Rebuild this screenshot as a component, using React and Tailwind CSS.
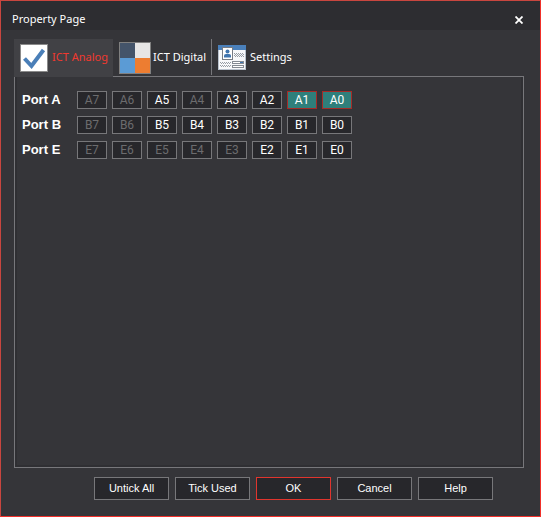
import { useState } from 'react'

const PORTS = [
  { name: 'A', disabled: [7, 6, 4] },
  { name: 'B', disabled: [7, 6] },
  { name: 'E', disabled: [7, 6, 5, 4, 3] },
]
const BITS = [7, 6, 5, 4, 3, 2, 1, 0]

function CheckIcon() {
  return (
    <svg className="size-7" viewBox="0 0 28 28" aria-hidden="true">
      <rect x="0.5" y="0.5" width="27" height="27" fill="#fff" stroke="#8a8a8a" />
      <path d="M4.5 14.5L11.5 22L23.5 6" fill="none" stroke="#4a7fb8" strokeWidth="4" />
    </svg>
  )
}

function BlocksIcon() {
  return (
    <svg className="size-8" viewBox="0 0 32 32" aria-hidden="true">
      <rect width="16" height="16" fill="#44546a" />
      <rect x="16" width="16" height="16" fill="#e7e6e6" />
      <rect y="16" width="16" height="16" fill="#5b9bd5" />
      <rect x="16" y="16" width="16" height="16" fill="#ed7d31" />
      <rect x="0.5" y="0.5" width="31" height="31" fill="none" stroke="#808080" />
    </svg>
  )
}

function ProfileIcon() {
  return (
    <svg className="h-[25px] w-7" viewBox="0 0 28 25" aria-hidden="true">
      <rect x="0.5" y="0.5" width="27" height="24" fill="#f7f8fa" stroke="#b9c2cd" />
      <rect width="28" height="5" fill="#4a80bb" />
      <rect x="4.5" y="2.5" width="10" height="12" fill="#fff" stroke="#777c84" />
      <circle cx="9.5" cy="6.5" r="2" fill="#3f74ae" />
      <path d="M6 12.5V10.5Q6 9 8 9H11Q13 9 13 10.5V12.5Z" fill="#3f74ae" />
      <g stroke="#969ca4" strokeDasharray="1 1">
        <path d="M16 8.5H26M17 9.5H26M16 10.5H26M17 11.5H26" />
        <path d="M2 17.5H13M3 18.5H13M2 20.5H13M3 21.5H13" />
      </g>
      <g fill="#fff" stroke="#858b93">
        <rect x="14.5" y="16.5" width="11" height="2" />
        <rect x="14.5" y="20.5" width="11" height="2" />
      </g>
      <path d="M22 17.5H25" stroke="#3f74ae" />
    </svg>
  )
}

function Tab({ icon, label, active, className, onClick }) {
  return (
    <button
      type="button"
      role="tab"
      aria-selected={active}
      onClick={onClick}
      className={`flex items-center border-b text-[11px] whitespace-nowrap ${className} ${
        active ? 'border-[#414145] bg-[#414145] text-[#f0392f]' : 'border-[#77777b] text-white'
      }`}
    >
      {icon}
      {label}
    </button>
  )
}

function PortRow({ port, selected, onToggle }) {
  return (
    <div className="flex items-center">
      <span className="w-[55px] text-[13px] leading-[18px] font-bold">Port {port.name}</span>
      <div className="flex gap-[5px]">
        {BITS.map((bit) => {
          const pin = `${port.name}${bit}`
          const on = selected.includes(pin)
          return (
            <button
              key={pin}
              type="button"
              aria-pressed={on}
              disabled={port.disabled.includes(bit)}
              onClick={() => onToggle(pin)}
              className={`h-[18px] w-[30px] border font-['Roboto',sans-serif] text-xs leading-4 disabled:text-[#6c6c6e] ${
                on ? 'border-[#a52c28] bg-[#2f7f7b]' : 'border-[#77777a] bg-[#27272b]'
              }`}
            >
              {pin}
            </button>
          )
        })}
      </div>
    </div>
  )
}

function FooterButton({ children, primary, onClick }) {
  return (
    <button
      type="button"
      onClick={onClick}
      className={`h-[23px] w-[75px] border bg-[#27272b] text-[11px] ${
        primary ? 'border-[#e0352e]' : 'border-[#77777a]'
      }`}
    >
      {children}
    </button>
  )
}

export default function App() {
  const [tab, setTab] = useState('analog')
  const [selected, setSelected] = useState(['A1', 'A0'])

  const toggle = (pin) => {
    setSelected((prev) => (prev.includes(pin) ? prev.filter((p) => p !== pin) : [...prev, pin]))
  }

  return (
    <div className="flex min-h-screen flex-col border border-t-[#c9463f] border-r-[#f0302a] border-b-[#f0302a] border-l-[#c9463f] bg-[#353539] font-['Liberation_Sans',sans-serif] text-white">
      {/* Title bar */}
      <header className="flex h-[29px] items-center justify-between bg-[#2d2d31] pt-2 pr-[17px] pl-[11px] font-['Noto_Sans',sans-serif]">
        <h1 className="text-[11px]">Property Page</h1>
        <button type="button" aria-label="Close">
          <svg className="size-2" viewBox="0 0 8 8" aria-hidden="true">
            <path d="M0.5 0.5L7.5 7.5M7.5 0.5L0.5 7.5" stroke="#fff" strokeWidth="1.8" />
          </svg>
        </button>
      </header>

      <main className="flex flex-1 flex-col pt-[9px] pr-4 pl-[13px]">
        {/* Tabs */}
        <div role="tablist" className="flex h-[38px] font-['Noto_Sans',sans-serif]">
          <Tab
            icon={<CheckIcon />}
            label="ICT Analog"
            active={tab === 'analog'}
            className="w-[99px] gap-1 pl-[6px]"
            onClick={() => setTab('analog')}
          />
          <Tab
            icon={<BlocksIcon />}
            label="ICT Digital"
            active={tab === 'digital'}
            className="w-[98px] gap-[2px] pl-[6px]"
            onClick={() => setTab('digital')}
          />
          <div className="border-b border-[#77777b] pb-px">
            <div className="h-full w-px bg-[#77777b]" />
          </div>
          <Tab
            icon={<ProfileIcon />}
            label="Settings"
            active={tab === 'settings'}
            className="gap-1 pl-[6px]"
            onClick={() => setTab('settings')}
          />
          <div className="flex-1 border-b border-[#77777b]" />
        </div>

        {/* Pins */}
        <div
          role="tabpanel"
          className="flex flex-1 flex-col border-x border-b border-[#77777b] shadow-[inset_-2px_-2px_0_#2f2f33,inset_2px_0_0_#2f2f33]"
        >
          <div className="flex flex-col gap-[7px] pt-[14px] pl-[7px]">
            {PORTS.map((port) => (
              <PortRow key={port.name} port={port} selected={selected} onToggle={toggle} />
            ))}
          </div>
        </div>
      </main>

      {/* Actions */}
      <footer className="flex justify-end gap-[6px] pt-[9px] pr-[47px] pb-4">
        <FooterButton onClick={() => setSelected([])}>Untick All</FooterButton>
        <FooterButton>Tick Used</FooterButton>
        <FooterButton primary>OK</FooterButton>
        <FooterButton>Cancel</FooterButton>
        <FooterButton>Help</FooterButton>
      </footer>
    </div>
  )
}
